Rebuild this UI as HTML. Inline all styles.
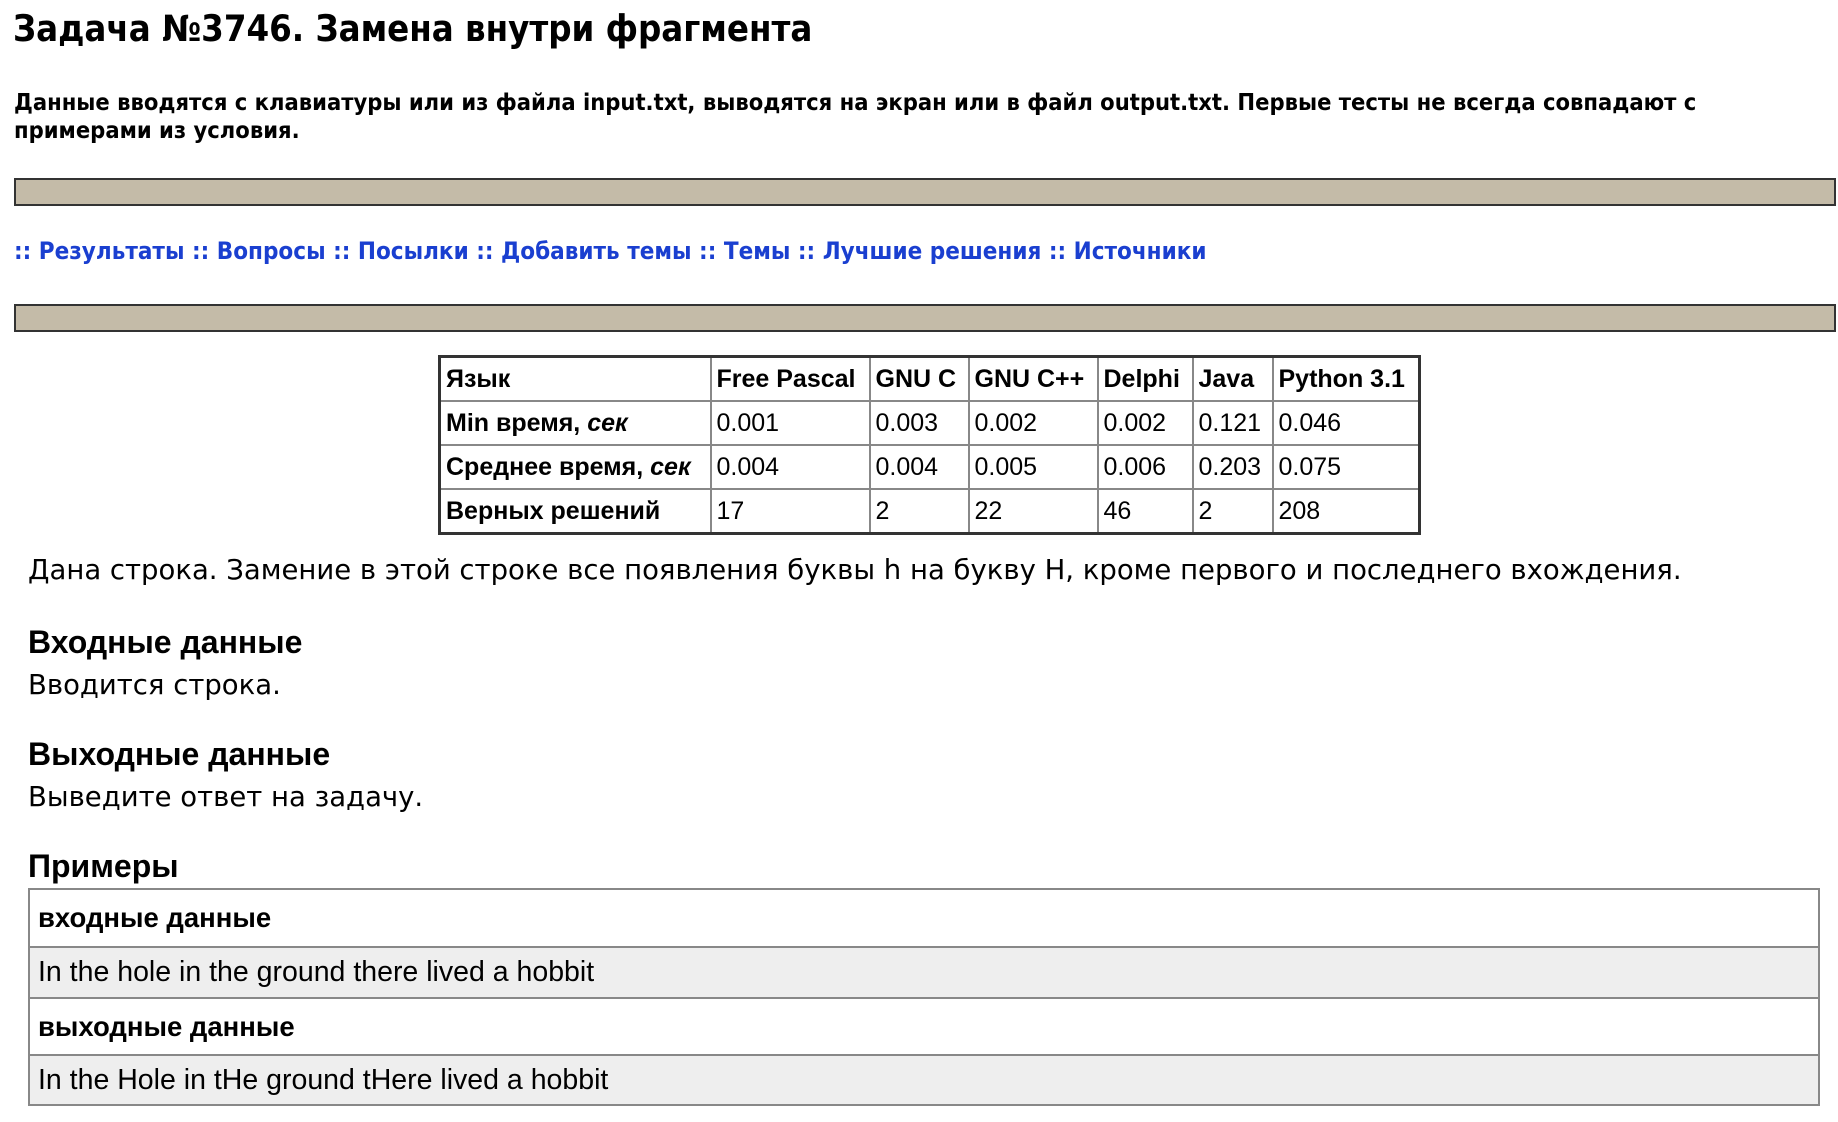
<!DOCTYPE html>
<html><head><meta charset="utf-8"><style>
body{margin:0;width:1838px;height:1122px;background:#fff;position:relative;overflow:hidden;color:#000}
.a{position:absolute;white-space:nowrap}
.v{font-family:"DejaVu Sans","Liberation Sans",sans-serif}
.vc{font-family:"DejaVu Sans Condensed","DejaVu Sans",sans-serif}
.l{font-family:"Liberation Sans",sans-serif}
.bar{position:absolute;left:14px;width:1818px;height:24px;background:#c4bba8;border:2px solid #333}
table.t{position:absolute;left:438px;top:355px;border-collapse:collapse;border:3px solid #333;font-family:"Liberation Sans",sans-serif;font-size:25px;table-layout:fixed;width:980px}
table.t td{border:2px solid #888;height:42px;padding:0 5px;white-space:nowrap;overflow:hidden}
.ex{position:absolute;left:28px;top:888px;width:1788px;border:2px solid #888;font-family:"Liberation Sans",sans-serif}
.ex div{border-top:2px solid #888;padding-left:8px;box-sizing:border-box}
.ex div:first-child{border-top:none}
</style></head><body>
<div class="a vc" style="left:13px;top:7px;font-size:36.2px;font-weight:bold">Задача №3746. Замена внутри фрагмента</div>
<div class="a vc" style="left:14px;top:88px;font-size:23.5px;font-weight:bold;line-height:28px;white-space:normal;width:1800px">Данные вводятся с клавиатуры или из файла input.txt, выводятся на экран или в файл output.txt. Первые тесты не всегда совпадают с примерами из условия.</div>
<div class="bar" style="top:178px"></div>
<div class="a vc" style="left:14px;top:237px;font-size:24px;font-weight:bold;color:#1a3fd0">:: Результаты :: Вопросы :: Посылки :: Добавить темы :: Темы :: Лучшие решения :: Источники</div>
<div class="bar" style="top:304px"></div>
<table class="t">
<colgroup><col style="width:271px"><col style="width:159px"><col style="width:99px"><col style="width:129px"><col style="width:95px"><col style="width:80px"><col style="width:147px"></colgroup>
<tr style="font-weight:bold"><td>Язык</td><td>Free Pascal</td><td>GNU C</td><td>GNU C++</td><td>Delphi</td><td>Java</td><td>Python 3.1</td></tr>
<tr><td><b>Min время, <i>сек</i></b></td><td>0.001</td><td>0.003</td><td>0.002</td><td>0.002</td><td>0.121</td><td>0.046</td></tr>
<tr><td><b>Среднее время, <i>сек</i></b></td><td>0.004</td><td>0.004</td><td>0.005</td><td>0.006</td><td>0.203</td><td>0.075</td></tr>
<tr><td><b>Верных решений</b></td><td>17</td><td>2</td><td>22</td><td>46</td><td>2</td><td>208</td></tr>
</table>
<div class="a v" style="left:28px;top:554px;font-size:27.5px">Дана строка. Замение в этой строке все появления буквы h на букву H, кроме первого и последнего вхождения.</div>
<div class="a l" style="left:28px;top:624px;font-size:32px;font-weight:bold">Входные данные</div>
<div class="a v" style="left:28px;top:669px;font-size:27.5px">Вводится строка.</div>
<div class="a l" style="left:28px;top:736px;font-size:32px;font-weight:bold">Выходные данные</div>
<div class="a v" style="left:28px;top:781px;font-size:27.5px">Выведите ответ на задачу.</div>
<div class="a l" style="left:28px;top:848px;font-size:32px;font-weight:bold">Примеры</div>
<div class="ex">
<div style="height:56px;line-height:56px;font-weight:bold;font-size:27.5px">входные данные</div>
<div style="height:51px;line-height:49px;background:#eee;font-size:28.5px">In the hole in the ground there lived a hobbit</div>
<div style="height:57px;line-height:56px;font-weight:bold;font-size:27.5px">выходные данные</div>
<div style="height:50px;line-height:48px;background:#eee;font-size:28.5px">In the Hole in tHe ground tHere lived a hobbit</div>
</div>
</body></html>
